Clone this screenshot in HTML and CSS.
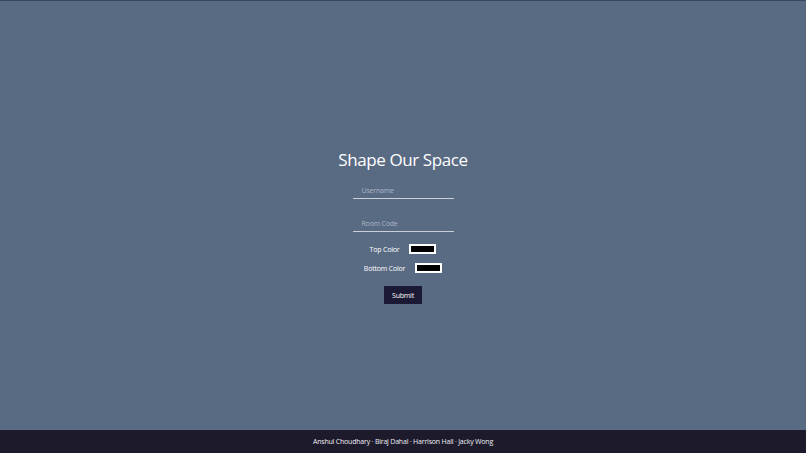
FILE: index.html
```html
<!DOCTYPE html>
<html lang="en">
<head>
<meta charset="utf-8">
<title>Shape Our Space</title>
<link rel="stylesheet" href="styles.css">
</head>
<body>
  <main class="page">
    <form class="join">
      <h1 class="title">Shape Our Space</h1>
      <input class="field" type="text" placeholder="Username">
      <input class="field field-last" type="text" placeholder="Room Code">
      <label class="color-row">Top Color <span class="swatch"></span></label>
      <label class="color-row">Bottom Color <span class="swatch"></span></label>
      <button class="submit" type="button">Submit</button>
    </form>
  </main>
  <footer class="credits">Anshul Choudhary · Biraj Dahal · Harrison Hall · Jacky Wong</footer>
</body>
</html>
```

FILE: styles.css
```css
html, body {
  margin: 0;
  height: 100%;
}
body {
  display: flex;
  flex-direction: column;
  background: #596a83;
  border-top: 1px solid #3a4660;
  box-sizing: border-box;
  font-family: "Open Sans", "Noto Sans", sans-serif;
  color: #fff;
}
.page {
  flex: 1;
  padding-top: 148px;
}
.join {
  display: flex;
  flex-direction: column;
  align-items: center;
}
.title {
  margin: 0 0 11px;
  font-weight: 400;
  font-size: 17px;
  letter-spacing: -0.4px;
  line-height: 21px;
}
.field {
  width: 101px;
  height: 18px;
  box-sizing: border-box;
  background: transparent;
  border: none;
  border-bottom: 1px solid #c9d0db;
  padding: 5px 0 4px 9px;
  font: inherit;
  font-size: 7px;
  letter-spacing: -0.2px;
  line-height: 8px;
  color: #fff;
  margin: 0 0 15px;
  outline: none;
}
.field-last {
  margin-bottom: 12px;
}
.field::placeholder {
  color: #aab5c5;
}
.color-row {
  display: flex;
  align-items: center;
  gap: 10px;
  height: 10px;
  font-size: 7px;
  letter-spacing: -0.2px;
  margin-bottom: 9px;
}
.swatch {
  width: 23px;
  height: 6px;
  background: #000;
  border: 2px solid #fff;
}
.submit {
  margin-top: 4px;
  background: #1c1935;
  color: #fff;
  border: none;
  font: inherit;
  font-size: 7px;
  letter-spacing: -0.2px;
  width: 38px;
  height: 18px;
  padding: 0;
}
.credits {
  background: #1d1a2b;
  color: #f0eff4;
  text-align: center;
  font-size: 7px;
  letter-spacing: -0.2px;
  height: 23px;
  line-height: 23px;
}
```
